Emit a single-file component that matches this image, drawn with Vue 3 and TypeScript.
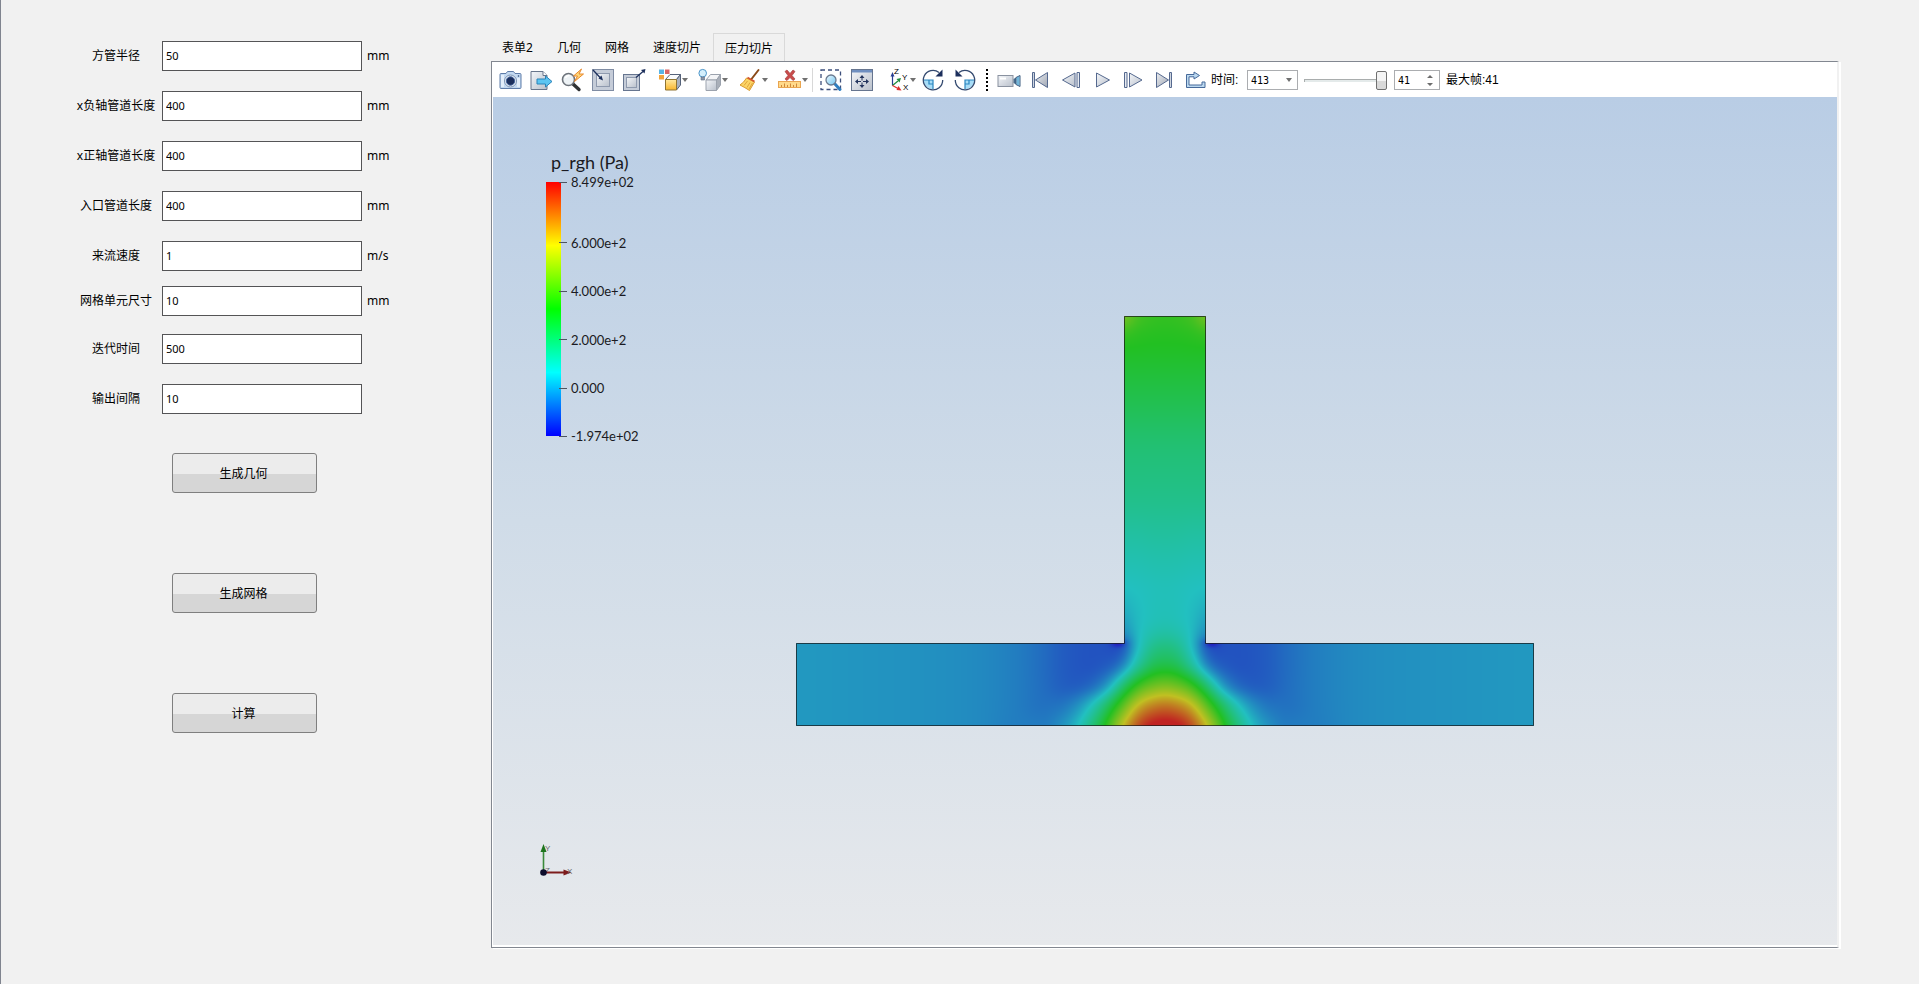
<script setup lang="ts">
import { onMounted, ref } from 'vue'

interface Field { id: string; label: string; value: string; unit: string; gap: string }

const fields = ref<Field[]>([
  { id: 'radius', label: '方管半径', value: '50', unit: 'mm', gap: '' },
  { id: 'neg-len', label: 'x负轴管道长度', value: '400', unit: 'mm', gap: '' },
  { id: 'pos-len', label: 'x正轴管道长度', value: '400', unit: 'mm', gap: '' },
  { id: 'inlet-len', label: '入口管道长度', value: '400', unit: 'mm', gap: '' },
  { id: 'velocity', label: '来流速度', value: '1', unit: 'm/s', gap: 'gap-small' },
  { id: 'cell', label: '网格单元尺寸', value: '10', unit: 'mm', gap: 'gap-medium' },
  { id: 'end-time', label: '迭代时间', value: '500', unit: '', gap: '' },
  { id: 'interval', label: '输出间隔', value: '10', unit: '', gap: '' },
])

const actions = ['生成几何', '生成网格', '计算']
const tabs = ['表单2', '几何', '网格', '速度切片', '压力切片']
const activeTab = ref(4)
const frame = ref(41)
const maxFrame = 41

const rangeMax = 849.9
const rangeMin = -197.4
const ticks = [
  { v: 849.9, text: '8.499e+02' },
  { v: 600, text: '6.000e+2' },
  { v: 400, text: '4.000e+2' },
  { v: 200, text: '2.000e+2' },
  { v: 0, text: '0.000' },
  { v: -197.4, text: '-1.974e+02' },
]
const tickTop = (v: number) => `${((rangeMax - v) / (rangeMax - rangeMin)) * 100}%`

// Normalised pressure sampled over half of the symmetric tee:
// columns are distances from the centre line, rows are heights relative to the junction.
const cols = [0, 10, 20, 30, 40, 50, 60, 75, 90, 105, 120, 150, 185, 220, 290, 370]
const far = [0.145, 0.163, 0.172, 0.18, 0.188]
const rows: [number, number[]][] = [
  [-327, [0.525, 0.53, 0.54, 0.57, 0.65]],
  [-312, [0.51, 0.512, 0.516, 0.525, 0.55]],
  [-300, [0.5, 0.5, 0.502, 0.505, 0.51]],
  [-244, [0.43, 0.43, 0.43, 0.43, 0.43]],
  [-194, [0.37, 0.37, 0.37, 0.37, 0.37]],
  [-144, [0.335, 0.335, 0.335, 0.335, 0.335]],
  [-110, [0.305, 0.305, 0.302, 0.3, 0.3]],
  [-77, [0.277, 0.276, 0.273, 0.27, 0.27]],
  [-50, [0.262, 0.26, 0.254, 0.248, 0.24]],
  [-27, [0.265, 0.262, 0.25, 0.235, 0.2]],
  [-9, [0.3, 0.29, 0.265, 0.22, 0.15]],
  [0, [0.34, 0.325, 0.28, 0.21, 0.09, 0.065, 0.075, 0.078, 0.083, 0.095, 0.115, ...far]],
  [20, [0.43, 0.415, 0.35, 0.27, 0.16, 0.1, 0.085, 0.078, 0.083, 0.095, 0.115, ...far]],
  [41, [0.63, 0.61, 0.57, 0.49, 0.38, 0.26, 0.165, 0.105, 0.09, 0.098, 0.117, ...far]],
  [61, [0.86, 0.84, 0.8, 0.72, 0.6, 0.475, 0.36, 0.235, 0.16, 0.128, 0.125, ...far]],
  [82, [1.05, 1.035, 0.99, 0.9, 0.78, 0.65, 0.5, 0.34, 0.23, 0.172, 0.142, ...far]],
]
const heights = rows.map((r) => r[0])

function interpolate(xs: number[], ys: number[], x: number): number {
  const n = xs.length
  let i = 0
  while (i < n - 2 && x > xs[i + 1]) i++
  const h = xs[i + 1] - xs[i]
  const s = Math.min(1, Math.max(0, (x - xs[i]) / h))
  const d = (k: number) => (ys[k + 1] - ys[k]) / (xs[k + 1] - xs[k])
  const slope = (k: number) => {
    if (k === 0) return 0
    if (k >= n - 1) return d(n - 2)
    const a = d(k - 1)
    const b = d(k)
    return a * b <= 0 ? 0 : (2 * a * b) / (a + b)
  }
  const s2 = s * s
  const s3 = s2 * s
  return (2 * s3 - 3 * s2 + 1) * ys[i] + (s3 - 2 * s2 + s) * h * slope(i)
    + (3 * s2 - 2 * s3) * ys[i + 1] + (s3 - s2) * h * slope(i + 1)
}

const stops = [[34, 34, 192], [34, 192, 192], [34, 192, 34], [192, 192, 34], [192, 34, 34]]
function colour(t: number): number[] {
  const p = Math.min(0.9999, Math.max(0, t)) * 4
  const i = Math.floor(p)
  return stops[i].map((c, k) => c + (stops[i + 1][k] - c) * (p - i))
}

const plot = ref<HTMLCanvasElement | null>(null)
const stemHeight = 327
const stemHalf = 40

onMounted(() => {
  const el = plot.value
  const ctx = el?.getContext('2d')
  if (!el || !ctx) return
  const w = el.width
  const h = el.height
  const half = w / 2

  const raw: number[][] = []
  for (let c = 0; c <= half; c++) {
    const profile = rows.map(([, r]) => interpolate(cols.slice(0, r.length), r, c))
    const first = c > stemHalf ? 11 : 0
    raw.push(Array.from({ length: h }, (_, y) =>
      interpolate(heights.slice(first), profile.slice(first), y - stemHeight)))
  }
  const offsets = [-8, -6, -4, -2, 0, 2, 4, 6, 8]
  const smooth = (c: number, y: number) => {
    let sum = 0
    let weight = 0
    for (const dx of offsets) {
      for (const dy of offsets) {
        const yy = Math.min(h - 1, Math.max(0, y + dy))
        const cc = Math.abs(c + dx)
        if (cc > half || (cc > stemHalf && yy < stemHeight)) continue
        const g = Math.exp(-(dx * dx + dy * dy) / 40)
        sum += raw[cc][yy] * g
        weight += g
      }
    }
    return sum / weight
  }

  const image = ctx.createImageData(w, h)
  for (let c = 0; c <= half; c++) {
    for (let y = 0; y < h; y++) {
      const v = y - stemHeight
      if (c > stemHalf && v < 0) continue
      const dip = 0.08 * Math.exp(-((c - 46) ** 2) / 50 - (v * v) / 14)
      const rgb = colour(smooth(c, y) - dip)
      for (const x of [half + c, half - 1 - c]) {
        if (x < 0 || x >= w) continue
        const o = (y * w + x) * 4
        image.data[o] = rgb[0]
        image.data[o + 1] = rgb[1]
        image.data[o + 2] = rgb[2]
        image.data[o + 3] = 255
      }
    }
  }
  ctx.putImageData(image, 0, 0)
  ctx.strokeStyle = 'rgba(24, 24, 24, 0.72)'
  const l = half - 40.5
  const r = half + 40.5
  ctx.beginPath()
  ctx.moveTo(l, 0.5)
  ctx.lineTo(r, 0.5)
  ctx.lineTo(r, 327.5)
  ctx.lineTo(w - 0.5, 327.5)
  ctx.lineTo(w - 0.5, h - 0.5)
  ctx.lineTo(0.5, h - 0.5)
  ctx.lineTo(0.5, 327.5)
  ctx.lineTo(l, 327.5)
  ctx.closePath()
  ctx.stroke()
})
</script>

<template>
  <main class="app">
    <form class="side" @submit.prevent>
      <div v-for="f in fields" :key="f.id" class="row" :class="f.gap">
        <label :for="f.id">{{ f.label }}</label>
        <input :id="f.id" v-model="f.value" type="text">
        <span class="unit">{{ f.unit }}</span>
      </div>
      <div class="actions">
        <button v-for="a in actions" :key="a" type="button">{{ a }}</button>
      </div>
    </form>

    <section class="work">
      <nav class="tabs" role="tablist">
        <button
          v-for="(t, i) in tabs" :key="t" type="button" role="tab" class="tab"
          :class="{ active: i === activeTab }" :aria-selected="i === activeTab" @click="activeTab = i"
        >{{ t }}</button>
      </nav>

      <div class="panel">
        <div class="toolbar">
          <svg class="defs" width="0" height="0" aria-hidden="true">
            <defs>
              <linearGradient id="steel" x1="0" y1="0" x2="1" y2="1"><stop offset="0" stop-color="#f4f6f9" /><stop offset="1" stop-color="#b9c0cb" /></linearGradient>
              <linearGradient id="sky" x1="0" y1="0" x2="1" y2="1"><stop offset="0" stop-color="#eefaff" /><stop offset="1" stop-color="#6fc4f0" /></linearGradient>
              <linearGradient id="gold" x1="0" y1="0" x2="0" y2="1"><stop offset="0" stop-color="#ffe9a0" /><stop offset="1" stop-color="#f9b62c" /></linearGradient>
              <linearGradient id="dim" x1="0" y1="0" x2="1" y2="1"><stop offset="0" stop-color="#eceef1" /><stop offset="1" stop-color="#a0a7b4" /></linearGradient>
            </defs>
          </svg>

          <button type="button" class="tool" aria-label="camera">
            <svg viewBox="0 0 24 24"><path d="M1 6.5Q1 5.5 2 5.5H7L8.5 3.5H14.5L16 5.5H21Q22 5.5 22 6.5V19.5Q22 20.5 21 20.5H2Q1 20.5 1 19.5Z" fill="#c3d9f1" stroke="#5f7ca8" /><path d="M2 7H5V19H2ZM18 10H21V19H18Z" fill="#e3eefa" /><circle cx="11.5" cy="13" r="6" fill="#eef3f9" stroke="#7b92b3" /><circle cx="11.5" cy="13" r="4.2" fill="#1c2f5c" stroke="#3f619b" /><circle cx="19.500" cy="8" r=".8" fill="#24406f" /></svg>
          </button>
          <button type="button" class="tool" aria-label="export">
            <svg viewBox="0 0 24 24"><path d="M1 3.5H13L17 7.5V21.5H1Z" fill="url(#steel)" stroke="#68758b" /><path d="M13 3.5V7.5H17" fill="#fff" stroke="#68758b" /><path d="M7 11H15.5V8L22 13.5L15.5 19V16H7Z" fill="#5cc5f2" stroke="#2a83b8" /></svg>
          </button>
          <button type="button" class="tool" aria-label="zoom to data">
            <svg viewBox="0 0 24 24"><path d="M12 16L18 21.5" stroke="#303234" stroke-width="3.4" stroke-linecap="round" /><circle cx="7.5" cy="11.5" r="6" fill="#eef3f6" stroke="#6d737b" stroke-width="1.6" /><path d="M4.5 10Q5.5 7.5 8.5 7.5" stroke="#fff" stroke-width="1.5" fill="none" /><path d="M20.5 1L12.500 8H16.5L13.5 13.5L22.5 6H18Z" fill="#ffd777" stroke="#e8882d" /></svg>
          </button>
          <button type="button" class="tool" aria-label="zoom in view">
            <svg viewBox="0 0 24 24"><rect x=".5" y="1.5" width="21" height="21" fill="#c5ccd8" stroke="#7f8ca3" /><rect x="4.5" y="5.5" width="13" height="13" fill="url(#steel)" stroke="#8f9aae" /><path d="M1 2L9 10.5" stroke="#1c2f5c" stroke-width="1.3" /><path d="M11 12.5L6.5 10.5L9.5 7.5Z" fill="#1c2f5c" /></svg>
          </button>
          <button type="button" class="tool" aria-label="zoom out view">
            <svg viewBox="0 0 24 24"><rect x=".5" y="6.5" width="16" height="16" fill="#c5ccd8" stroke="#66758f" /><rect x="3.5" y="9.5" width="10" height="10" fill="url(#steel)" stroke="#8f9aae" /><path d="M13 9.5L20 3.5" stroke="#1c2f5c" stroke-width="1.3" /><path d="M22.5 1L21.5 5.5L18 2Z" fill="#1c2f5c" /></svg>
          </button>

          <button type="button" class="tool menu" aria-label="colour by">
            <svg viewBox="0 0 24 24"><path d="M1 1.5H6V6H1Z" fill="#59b5e5" /><path d="M7 1.5H11.5V6H7Z" fill="#d96666" /><path d="M1 7H6V11.5H1Z" fill="#f2a33c" /><path d="M7.5 11.5L12 6.5H22.5L18.5 11.5Z" fill="#fafbfc" stroke="#55627a" /><path d="M18.5 11.5L22.5 6.5V17L18.5 22Z" fill="#a8b0be" stroke="#55627a" /><path d="M7.5 11.5H18.5V22H7.5Z" fill="url(#gold)" stroke="#8f7432" /></svg>
            <i class="caret" />
          </button>
          <button type="button" class="tool menu" aria-label="lighting">
            <svg viewBox="0 0 24 24"><path d="M8 12L12.5 6.5H22.5L18.5 12Z" fill="#f4f5f7" stroke="#9ba2ad" /><path d="M18.5 12L22.5 6.5V17L18.5 22.5Z" fill="#a9afb9" stroke="#9ba2ad" /><path d="M8 12H18.5V22.5H8Z" fill="url(#steel)" stroke="#9ba2ad" /><circle cx="4.7" cy="5.2" r="3.8" fill="#d4effc" stroke="#4d95c9" /><path d="M3 9H6.5V12H3Z" fill="#8b96a8" stroke="#5f6c82" stroke-width=".6" /></svg>
            <i class="caret" />
          </button>
          <button type="button" class="tool menu" aria-label="clear">
            <svg viewBox="0 0 24 24"><path d="M20.5 2L13.5 11" stroke="#8a4a18" stroke-width="2" stroke-linecap="round" /><path d="M8.5 10L16.5 14L11.5 22.5Q7 19.5 2 17Q6 14.5 8.5 10Z" fill="#fcd566" stroke="#d99a2d" /><path d="M9.5 9.5L16.5 13.5" stroke="#d4552f" stroke-width="1.5" /><path d="M9.5 13L6 17.5M12 14.5L9 19.5M14.5 15L11 21" stroke="#e0a53c" /></svg>
            <i class="caret" />
          </button>
          <button type="button" class="tool menu" aria-label="delete ruler">
            <svg viewBox="0 0 24 24"><path d="M7 3.5L9 2L12 5.5L15 2L17 3.5L14 7.5L17 11L15 12.5L12 9.5L9 12.5L7 11L10 7.5Z" fill="#c94b4b" stroke="#a84444" stroke-width=".7" /><rect x=".5" y="13.5" width="22" height="6" fill="#ffd98a" stroke="#e9a550" /><path d="M3.5 17V19M6.5 15.5V19M9.5 17V19M12.5 15.5V19M15.5 17V19M18.5 15.5V19" stroke="#d0893a" /></svg>
            <i class="caret" />
          </button>

          <span class="separator" />

          <button type="button" class="tool" aria-label="zoom to box">
            <svg viewBox="0 0 24 24"><rect x="1" y="2" width="19.5" height="19.5" fill="none" stroke="#3d4f7c" stroke-width="1.3" stroke-dasharray="4 3" /><path d="M14.5 15.5L20 21.5" stroke="#2f7ec0" stroke-width="3" stroke-linecap="round" /><circle cx="11" cy="12" r="5" fill="url(#sky)" stroke="#6b7a90" stroke-width="1.3" /></svg>
          </button>
          <button type="button" class="tool" aria-label="fit view">
            <svg viewBox="0 0 24 24"><rect x=".5" y="1.5" width="21" height="21" fill="url(#steel)" stroke="#66758f" /><path d="M1 2H21V4.5H1Z" fill="#6f8fc0" /><path d="M11 7L13.5 10H8.5ZM11 20L13.5 17H8.5ZM4 13.5L7 11V16ZM18 13.5L15 11V16Z" fill="#24355e" /><path d="M11 9.5V17.5M7 13.5H15" stroke="#24355e" stroke-dasharray="3 2" /></svg>
          </button>
          <button type="button" class="tool menu" aria-label="view direction">
            <svg viewBox="0 0 24 24"><path d="M6.5 17.5V8" stroke="#2a3f93" stroke-width="1.2" /><path d="M6.5 4L8.5 8.5H4.5Z" fill="#2a3f93" /><path d="M6.5 17.5L12 13" stroke="#1e8c3c" stroke-width="1.2" /><path d="M15 10L13.5 14.5L10.5 11Z" fill="#1e8c3c" /><path d="M6.5 17.5L12 20.5" stroke="#e02d2d" stroke-width="1.2" /><path d="M15.5 22.5L10.5 22L12.5 18Z" fill="#e02d2d" /><text x="8" y="6" class="axis">Z</text><text x="16" y="12" class="axis">Y</text><text x="17" y="22" class="axis">X</text></svg>
            <i class="caret" />
          </button>
          <button type="button" class="tool" aria-label="rotate clockwise">
            <svg viewBox="0 0 24 24"><path d="M11 12H1.5Q2 20 11 21.5Z" fill="#a8ddf7" /><path d="M2 12H11V21M7 12V16H11" fill="none" stroke="#2a86c0" stroke-width="1.2" /><path d="M17 4.5A9.7 9.7 0 1 0 20.7 12" fill="none" stroke="#33496f" stroke-width="1.3" /><path d="M20.5 1.5V8.5H13.5Z" fill="#1c2f5c" /></svg>
          </button>
          <button type="button" class="tool" aria-label="rotate counter-clockwise">
            <svg viewBox="0 0 24 24"><path d="M12 12H21.5Q21 20 12 21.5Z" fill="#a8ddf7" /><path d="M21 12H12V21M16 12V16H12" fill="none" stroke="#2a86c0" stroke-width="1.2" /><path d="M6 4.5A9.7 9.7 0 1 1 2.3 12" fill="none" stroke="#33496f" stroke-width="1.3" /><path d="M2.5 1.5V8.5H9.5Z" fill="#1c2f5c" /></svg>
          </button>

          <span class="grip" />

          <button type="button" class="tool" aria-label="record">
            <svg viewBox="0 0 24 24"><rect x="0" y="7.5" width="15" height="11" fill="url(#steel)" stroke="#8a92a0" /><path d="M2 10.500H8" stroke="#fff" stroke-width="2" /><path d="M15.500 11L18 9.5V16.5L15.500 15Z" fill="#4a6c8c" /><path d="M18 9.5L22 7.5V18.5L18 16.5Z" fill="#a5dcf3" stroke="#3d5c80" /><path d="M20 9V17" stroke="#3d8fc0" /></svg>
          </button>
          <button type="button" class="tool" aria-label="first frame">
            <svg viewBox="0 0 24 24"><path d="M3.5 4.5H5.5V19.5H3.5Z" fill="#cfd6e0" stroke="#55698f" /><path d="M18.5 4.5V19.5L6.5 12Z" fill="url(#dim)" stroke="#55698f" /></svg>
          </button>
          <button type="button" class="tool" aria-label="previous frame">
            <svg viewBox="0 0 24 24"><path d="M15 5V19L2.5 12Z" fill="url(#steel)" stroke="#55698f" /><path d="M17 4.5H19.5V19.5H17Z" fill="#e6eaf0" stroke="#55698f" /></svg>
          </button>
          <button type="button" class="tool" aria-label="play">
            <svg viewBox="0 0 24 24"><path d="M5.5 5V19L18.5 12Z" fill="url(#steel)" stroke="#55698f" /></svg>
          </button>
          <button type="button" class="tool" aria-label="next frame">
            <svg viewBox="0 0 24 24"><path d="M7.5 5V19L20 12Z" fill="url(#steel)" stroke="#55698f" /><path d="M2.5 4.5H5V19.5H2.5Z" fill="#e6eaf0" stroke="#55698f" /></svg>
          </button>
          <button type="button" class="tool" aria-label="last frame">
            <svg viewBox="0 0 24 24"><path d="M3.5 4.5V19.5L15.5 12Z" fill="url(#dim)" stroke="#55698f" /><path d="M16.5 4.5H18.5V19.5H16.5Z" fill="#cfd6e0" stroke="#55698f" /></svg>
          </button>
          <button type="button" class="tool" aria-label="loop">
            <svg viewBox="0 0 24 24"><path d="M2.5 19.5V6.5H10V4L15.5 7.5L10 11V8.8H5V17H18V14H21V19.5Z" fill="#bcd9f0" stroke="#476a9a" /></svg>
          </button>

          <label class="time-label" for="time">时间:</label>
          <span class="combo">
            <select id="time"><option>413</option></select>
            <i class="caret" />
          </span>
          <input v-model.number="frame" class="slider" type="range" min="1" :max="maxFrame" aria-label="帧">
          <span class="spin">
            <input v-model.number="frame" type="number" min="1" :max="maxFrame" aria-label="当前帧">
            <svg viewBox="0 0 6 11" aria-hidden="true"><path d="M0 3L3 0L6 3ZM0 8L3 11L6 8Z" fill="#6d6d6d" /></svg>
          </span>
          <span class="max-label">最大帧:{{ maxFrame }}</span>
        </div>

        <div class="viewport">
          <canvas ref="plot" width="738" height="410" />

          <div class="legend">
            <h2>p_rgh (Pa)</h2>
            <div class="scale">
              <span v-for="t in ticks" :key="t.text" class="tick" :style="{ top: tickTop(t.v) }">{{ t.text }}</span>
            </div>
          </div>

          <svg class="triad" viewBox="0 0 40 40" aria-hidden="true">
            <text x="12" y="8">Y</text>
            <text x="12" y="30">Z</text>
            <path d="M10.5 29V8" stroke="#3a8a3a" stroke-width="1.6" />
            <path d="M10.5 1L13.5 9H7.5Z" fill="#1d741d" />
            <path d="M11 29.5H32" stroke="#7d1c1c" stroke-width="2" />
            <path d="M38.5 29.5L30.5 26.5V32.5Z" fill="#7d1c1c" />
            <circle cx="10.5" cy="29.5" r="3.3" fill="#0d0d2c" />
            <text x="34" y="31">X</text>
          </svg>
        </div>
      </div>
    </section>
  </main>
</template>

<style>
body {
  background: #f1f1f1;
}
</style>

<style scoped>
.app {
  box-sizing: border-box;
  display: flex;
  min-height: 100vh;
  border-left: 1px solid #80848f;
  background: #f1f1f1;
  color: #000;
  font: 12px/18px "Noto Sans", "Noto Sans CJK SC", sans-serif;
}

button,
input,
select {
  box-sizing: border-box;
  margin: 0;
  color: inherit;
  font: inherit;
}

.side {
  flex: none;
  width: 420px;
  padding: 41px 0 36px 69px;
}

.row {
  display: flex;
  align-items: center;
  margin-bottom: 20px;
}

.gap-small {
  margin-bottom: 15px;
}

.gap-medium {
  margin-bottom: 18px;
}

.row label {
  width: 92px;
  text-align: center;
}

.row input {
  width: 200px;
  height: 30px;
  padding: 0 3px 2px;
  border: 1px solid #545456;
  background: #fff;
  font-size: 11px;
}

.unit {
  margin-left: 5px;
}

.actions {
  display: flex;
  flex-direction: column;
  gap: 80px;
  margin: 39px 0 0 102px;
}

.actions button {
  width: 145px;
  height: 40px;
  padding: 2px 2px 0 0;
  border: 1px solid #7f7f7f;
  border-radius: 3px;
  background: linear-gradient(#ececec 0 52%, #d6d6d6 52%);
}

.work {
  display: flex;
  flex: 1;
  flex-direction: column;
  min-width: 0;
  padding: 33px 80px 36px 0;
}

.tabs {
  display: flex;
  height: 28px;
}

.tab {
  padding: 2px 12px 0;
  border: 0;
  background: none;
}

.tab.active {
  padding: 2px 11px 0;
  border: 1px solid #d9d9d9;
  border-bottom: 0;
}

.panel {
  display: flex;
  flex: 1;
  flex-direction: column;
  margin-left: 1px;
  padding: 0 0 2px 1px;
  border: 1px solid #828790;
  border-right: 2px solid #f1f1f1;
  background: #fff;
  box-shadow: 2px 1px 0 #fff;
}

.toolbar {
  display: flex;
  padding: 6px 0 5px 2px;
  background: #fff;
  font-family: "Liberation Sans", "Noto Sans CJK SC", sans-serif;
}

.defs {
  position: absolute;
}

.tool {
  display: flex;
  flex: none;
  align-items: center;
  width: 31px;
  height: 24px;
  padding: 0 3px 0 4px;
  border: 0;
  background: none;
}

.tool svg {
  flex: none;
  width: 24px;
  height: 24px;
  overflow: visible;
}

.tool.menu {
  width: 40px;
  padding: 0 2px 0 8px;
}

.caret {
  flex: none;
  width: 6px;
  height: 4px;
  background: #707070;
  clip-path: polygon(0 0, 100% 0, 50% 100%);
}

.axis {
  font: 8px "Liberation Sans", sans-serif;
}

.separator {
  width: 1px;
  margin: 0 3px 0 2px;
  background: #d8d8d8;
}

.grip {
  width: 2px;
  height: 22px;
  margin: 1px 6px 0;
  background: repeating-linear-gradient(#000 0 2px, transparent 2px 4px);
}

.time-label {
  width: 36px;
  line-height: 24px;
  white-space: nowrap;
}

.combo,
.spin {
  display: flex;
  flex: none;
  align-items: center;
  box-sizing: border-box;
  height: 20px;
  margin-top: 2px;
  border: 1px solid #abadb0;
  background: #fff;
  font: 10px "DejaVu Sans Mono", monospace;
}

.combo {
  width: 51px;
  padding-right: 5px;
}

.combo select,
.spin input {
  flex: 1;
  min-width: 0;
  height: 18px;
  padding: 0 0 0 3px;
  border: 0;
  background: none;
  appearance: none;
  outline: 0;
}

.spin {
  width: 46px;
  padding-right: 6px;
}

.spin input {
  appearance: textfield;
}

.spin input::-webkit-inner-spin-button {
  margin: 0;
  appearance: none;
}

.spin svg {
  width: 6px;
  height: 11px;
}

.slider {
  width: 83px;
  height: 20px;
  margin: 2px 7px 0 6px;
  background: none;
  appearance: none;
}

.slider::-webkit-slider-runnable-track {
  height: 3px;
  border-top: 1px solid #a9adad;
  border-left: 1px solid #a9adad;
  box-sizing: border-box;
  background: #e4eaea;
}

.slider::-webkit-slider-thumb {
  box-sizing: border-box;
  width: 11px;
  height: 19px;
  margin-top: -9px;
  border: 1px solid #707070;
  border-radius: 2px;
  background: linear-gradient(#f4f4f4 50%, #d9d9d9 50%);
  appearance: none;
}

.max-label {
  margin-left: 6px;
  line-height: 24px;
  white-space: nowrap;
}

.viewport {
  position: relative;
  display: flex;
  flex: 1;
  align-items: center;
  justify-content: center;
  background: linear-gradient(#b9cde5, #d0dce8 50%, #e7e9ec);
}

.legend {
  position: absolute;
  top: 53px;
  left: 53px;
  color: #1a1a22;
  font-family: Lato, sans-serif;
}

.legend h2 {
  margin: 0 0 8px 5px;
  font-size: 18px;
  font-weight: 400;
  line-height: 24px;
}

.scale {
  position: relative;
  width: 15px;
  height: 254px;
  background: linear-gradient(#f00, #ff0 25%, #0f0 50%, #0ff 75%, #00f);
}

.tick {
  position: absolute;
  left: 13px;
  display: flex;
  align-items: center;
  height: 16px;
  margin-top: -8px;
  font-size: 13px;
  white-space: nowrap;
}

.tick::before {
  width: 8px;
  height: 1px;
  margin-right: 4px;
  background: #4d5560;
  content: "";
}

.triad {
  position: absolute;
  bottom: 62px;
  left: 40px;
  width: 40px;
  height: 40px;
  overflow: visible;
}

.triad text {
  fill: #666a70;
  font: 8px "Liberation Sans", sans-serif;
}
</style>
